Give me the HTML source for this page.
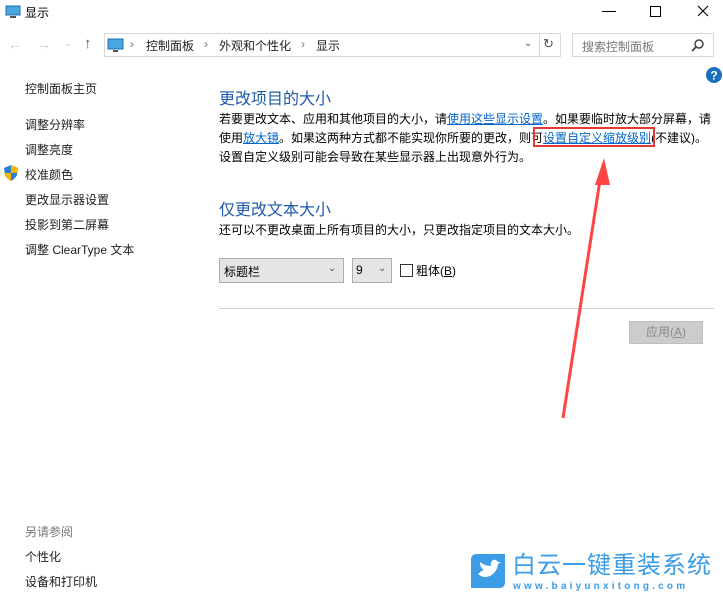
<!DOCTYPE html>
<html><head><meta charset="utf-8"><style>
*{margin:0;padding:0;box-sizing:border-box}
body{width:723px;height:598px;background:#fff;position:relative;overflow:hidden;font-family:"Liberation Sans","Noto Sans CJK SC",sans-serif;font-size:12px;color:#000}
.a{position:absolute;white-space:nowrap}
.lnk{color:#0066cc;text-decoration:underline}
.nav{color:#1e1e1e;font-size:12px}
.blue{color:#1e5aa8}
</style></head><body>
<svg class="a" style="left:5px;top:5px" width="16" height="14"><rect x="1" y="1" width="14" height="9" fill="#4aa6e0" stroke="#1f6fb0"/><rect x="5" y="11" width="6" height="2" fill="#555"/></svg>
<div class="a" style="left:25px;top:4px;font-size:12px">显示</div>
<div class="a" style="left:602px;top:11px;width:14px;height:1px;background:#000"></div>
<div class="a" style="left:650px;top:6px;width:11px;height:11px;border:1px solid #000"></div>
<svg class="a" style="left:697px;top:5px" width="12" height="12"><path d="M1 1 L11 11 M11 1 L1 11" stroke="#000" stroke-width="1.1"/></svg>
<div class="a" style="left:8px;top:36px;color:#c8c8c8;font-size:14px">←</div>
<div class="a" style="left:37px;top:36px;color:#c8c8c8;font-size:14px">→</div>
<div class="a" style="left:64px;top:38px;color:#c8c8c8;font-size:9px">⌄</div>
<div class="a" style="left:84px;top:35px;color:#555;font-size:15px">↑</div>
<div class="a" style="left:104px;top:33px;width:457px;height:24px;border:1px solid #d9d9d9"></div>
<svg class="a" style="left:107px;top:38px" width="17" height="14"><rect x="1" y="1" width="15" height="10" fill="#4aa6e0" stroke="#1f6fb0"/><rect x="6" y="12" width="5" height="2" fill="#555"/></svg>
<div class="a nav" style="left:130px;top:37px;color:#777">›</div>
<div class="a nav" style="left:146px;top:37px">控制面板</div>
<div class="a nav" style="left:204px;top:37px;color:#777">›</div>
<div class="a nav" style="left:219px;top:37px">外观和个性化</div>
<div class="a nav" style="left:301px;top:37px;color:#777">›</div>
<div class="a nav" style="left:316px;top:37px">显示</div>
<div class="a" style="left:539px;top:33px;width:1px;height:24px;background:#d9d9d9"></div>
<div class="a" style="left:524px;top:38px;font-size:10px;color:#555">⌄</div>
<div class="a" style="left:543px;top:36px;font-size:13px;color:#555">↻</div>
<div class="a" style="left:572px;top:33px;width:142px;height:24px;border:1px solid #d9d9d9"></div>
<div class="a" style="left:582px;top:38px;color:#777">搜索控制面板</div>
<svg class="a" style="left:691px;top:38px" width="14" height="14"><circle cx="8" cy="6" r="4" fill="none" stroke="#444" stroke-width="1.5"/><path d="M5 9 L1 13" stroke="#444" stroke-width="1.8"/></svg>
<svg class="a" style="left:706px;top:67px" width="16" height="16"><circle cx="8" cy="8" r="8" fill="#1a6fc0"/><text x="8" y="12.5" fill="#fff" font-size="12" font-weight="bold" text-anchor="middle" font-family="Liberation Sans">?</text></svg>
<div class="a nav" style="left:25px;top:80px">控制面板主页</div>
<div class="a nav" style="left:25px;top:116px">调整分辨率</div>
<div class="a nav" style="left:25px;top:141px">调整亮度</div>
<svg class="a" style="left:3px;top:164px" width="16" height="18"><path d="M8 1 L15 4 L14 11 Q12 15 8 17 Q4 15 2 11 L1 4 Z" fill="#2a7fd0"/><path d="M8 1 L15 4 L14 9 L8 9 Z" fill="#f5b800"/><path d="M1 9 L8 9 L8 17 Q4 15 2 11 Z" fill="#f5b800"/></svg>
<div class="a nav" style="left:25px;top:166px">校准颜色</div>
<div class="a nav" style="left:25px;top:191px">更改显示器设置</div>
<div class="a nav" style="left:25px;top:216px">投影到第二屏幕</div>
<div class="a nav" style="left:25px;top:241px">调整 ClearType 文本</div>
<div class="a" style="left:25px;top:523px;color:#777">另请参阅</div>
<div class="a nav" style="left:25px;top:548px">个性化</div>
<div class="a nav" style="left:25px;top:573px">设备和打印机</div>
<div class="a blue" style="left:219px;top:85px;font-size:16px">更改项目的大小</div>
<div class="a" style="left:219px;top:110px;line-height:19px">若要更改文本、应用和其他项目的大小，请<span class="lnk">使用这些显示设置</span>。如果要临时放大部分屏幕，请<br>使用<span class="lnk">放大镜</span>。如果这两种方式都不能实现你所要的更改，则可<span class="lnk">设置自定义缩放级别</span>(不建议)。<br>设置自定义级别可能会导致在某些显示器上出现意外行为。</div>
<div class="a" style="left:533px;top:127px;width:122px;height:20px;border:2px solid #e53935"></div>
<div class="a blue" style="left:219px;top:196px;font-size:16px">仅更改文本大小</div>
<div class="a" style="left:219px;top:221px">还可以不更改桌面上所有项目的大小，只更改指定项目的文本大小。</div>
<div class="a" style="left:219px;top:258px;width:125px;height:25px;border:1px solid #adadad;background:#e5e5e5"></div>
<div class="a" style="left:224px;top:263px">标题栏</div>
<div class="a" style="left:328px;top:263px;color:#555;font-size:10px">⌄</div>
<div class="a" style="left:352px;top:258px;width:40px;height:25px;border:1px solid #adadad;background:#e5e5e5"></div>
<div class="a" style="left:356px;top:263px">9</div>
<div class="a" style="left:378px;top:263px;color:#555;font-size:10px">⌄</div>
<div class="a" style="left:400px;top:264px;width:13px;height:13px;border:1px solid #333"></div>
<div class="a" style="left:416px;top:262px">粗体(<u>B</u>)</div>
<div class="a" style="left:219px;top:308px;width:495px;height:1px;background:#d0d0d0"></div>
<div class="a" style="left:629px;top:321px;width:74px;height:23px;border:1px solid #bfbfbf;background:#ccc;color:#8a8a8a;text-align:center;line-height:21px">应用(<u>A</u>)</div>
<svg class="a" style="left:0;top:0" width="723" height="598"><path d="M563 418 L600 180" stroke="#ff4444" stroke-width="3"/><path d="M604 158 L595 185 L610 185 Z" fill="#ff4444"/></svg>
<svg class="a" style="left:471px;top:554px" width="34" height="34"><path d="M6 0 H34 V28 Q34 34 28 34 H0 V6 Q0 0 6 0Z" fill="#3c9ce6"/><path d="M7 20 Q14 26 22 20 Q27 15 27 10 L30 8 L27 8 Q25 5 22 6 Q19 8 20 12 Q14 12 9 8 Q9 14 13 16 Q10 17 7 20Z" fill="#fff"/></svg>
<div class="a" style="left:512px;top:552px;font-size:24px;color:#3c9ce6;letter-spacing:1px;line-height:27px">白云一键重装系统</div>
<div class="a" style="left:513px;top:581px;font-size:10px;color:#3c9ce6;letter-spacing:3.2px;font-weight:bold">www.baiyunxitong.com</div>
</body></html>
